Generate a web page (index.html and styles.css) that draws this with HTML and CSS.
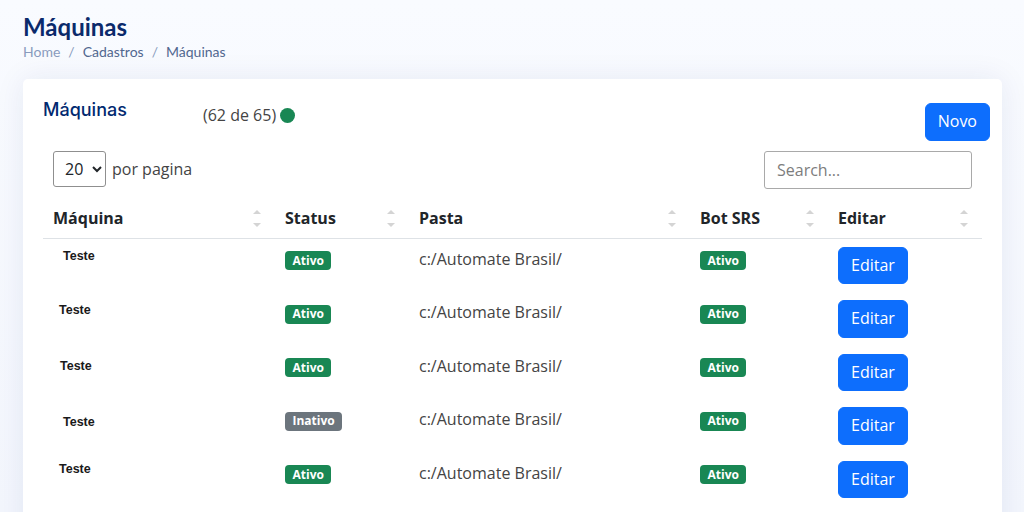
FILE: index.html
```html
<!DOCTYPE html>
<html lang="pt-BR">
<head>
<meta charset="utf-8">
<title>Máquinas</title>
<link rel="stylesheet" href="styles.css">
</head>
<body>
<main class="main">
  <div class="pagetitle">
    <h1>Máquinas</h1>
    <nav class="breadcrumb">
      <span class="bc-link">Home</span>
      <span class="bc-sep">/</span>
      <span class="bc-item">Cadastros</span>
      <span class="bc-sep">/</span>
      <span class="bc-item">Máquinas</span>
    </nav>
  </div>

  <section class="card">
    <div class="card-top">
      <h5 class="card-title">Máquinas</h5>
      <div class="count">(62 de 65) <span class="dot"></span></div>
      <button class="btn btn-primary btn-novo">Novo</button>
    </div>

    <div class="controls">
      <div class="per-page">
        <select class="selector">
          <option>20</option>
        </select>
        <span class="per-label">por pagina</span>
      </div>
      <input class="search" type="text" placeholder="Search...">
    </div>

    <table class="dt">
      <colgroup>
        <col class="c1"><col class="c2"><col class="c3"><col class="c4"><col class="c5">
      </colgroup>
      <thead>
        <tr>
          <th class="sortable">Máquina</th>
          <th class="sortable">Status</th>
          <th class="sortable">Pasta</th>
          <th class="sortable">Bot SRS</th>
          <th class="sortable">Editar</th>
        </tr>
      </thead>
      <tbody>
        <tr>
          <td><span class="name n1">Teste</span></td>
          <td><span class="badge bg-success">Ativo</span></td>
          <td class="path">c:/Automate Brasil/</td>
          <td><span class="badge bg-success">Ativo</span></td>
          <td><button class="btn btn-primary">Editar</button></td>
        </tr>
        <tr>
          <td><span class="name n2">Teste</span></td>
          <td><span class="badge bg-success">Ativo</span></td>
          <td class="path">c:/Automate Brasil/</td>
          <td><span class="badge bg-success">Ativo</span></td>
          <td><button class="btn btn-primary">Editar</button></td>
        </tr>
        <tr>
          <td><span class="name n3">Teste</span></td>
          <td><span class="badge bg-success">Ativo</span></td>
          <td class="path">c:/Automate Brasil/</td>
          <td><span class="badge bg-success">Ativo</span></td>
          <td><button class="btn btn-primary">Editar</button></td>
        </tr>
        <tr>
          <td><span class="name n4">Teste</span></td>
          <td><span class="badge bg-secondary">Inativo</span></td>
          <td class="path">c:/Automate Brasil/</td>
          <td><span class="badge bg-success">Ativo</span></td>
          <td><button class="btn btn-primary">Editar</button></td>
        </tr>
        <tr>
          <td><span class="name n5">Teste</span></td>
          <td><span class="badge bg-success">Ativo</span></td>
          <td class="path">c:/Automate Brasil/</td>
          <td><span class="badge bg-success">Ativo</span></td>
          <td><button class="btn btn-primary">Editar</button></td>
        </tr>
      </tbody>
    </table>
  </section>
</main>
</body>
</html>
```

FILE: styles.css
```css
* { box-sizing: border-box; }

html, body {
  margin: 0;
  height: 100%;
  overflow: hidden;
}

body {
  background: linear-gradient(180deg, #f9fbff 0%, #f3f6fd 100%);
  font-family: "Open Sans", "Noto Sans", sans-serif;
  color: #444444;
}

.main {
  padding: 12px 22px 0 23px;
}

.pagetitle {
  margin-bottom: 17px;
}

.pagetitle h1 {
  margin: 0;
  font-family: "Lato", "Open Sans", sans-serif;
  font-size: 24px;
  line-height: 29px;
  font-weight: 700;
  color: #0b2a6b;
}

.breadcrumb {
  display: flex;
  gap: 8px;
  font-family: "Lato", "Open Sans", sans-serif;
  font-size: 14px;
  line-height: 21px;
  font-weight: 400;
  color: #51678f;
}

.bc-link { color: #899bbd; }
.bc-sep { color: #899bbd; }

.card {
  background: #ffffff;
  border-radius: 5px;
  box-shadow: 0 0 30px rgba(1, 41, 112, 0.08);
  padding: 20px 20px 20px 20px;
  height: 500px;
}

.card-top {
  display: flex;
  align-items: flex-start;
}

.card-title {
  margin: 0;
  width: 160px;
  font-family: "Inter", "Roboto", sans-serif;
  font-size: 18px;
  line-height: 22px;
  font-weight: 500;
  color: #012970;
}

.count {
  margin-top: 4px;
  font-size: 16px;
  line-height: 24px;
  color: #444444;
  display: flex;
  align-items: center;
  gap: 4px;
}

.dot {
  display: inline-block;
  width: 15px;
  height: 15px;
  border-radius: 50%;
  background: #198754;
}

.btn {
  font-family: "Open Sans", sans-serif;
  font-size: 16px;
  line-height: 23.5px;
  padding: 6px 12px;
  border: 1px solid transparent;
  border-radius: 6px;
  cursor: pointer;
}

.btn-primary {
  background: #0d6efd;
  border-color: #0d6efd;
  color: #ffffff;
}

.btn-novo {
  margin-left: auto;
  margin-right: -8px;
  margin-top: 4px;
  padding: 6px 12px;
}

.controls {
  display: flex;
  justify-content: space-between;
  align-items: flex-start;
  padding: 0 10px;
  margin-top: 10px;
}

.per-page {
  display: flex;
  align-items: center;
  gap: 6px;
}

.selector {
  width: 53px;
  height: 36px;
  font-family: "Open Sans", sans-serif;
  font-size: 16px;
  color: #212529;
  border: 1px solid #8f8f8f;
  border-radius: 3px;
  background: #ffffff;
  padding: 0 4px 0 7px;
}

.per-label {
  font-size: 16px;
  color: #444444;
}

.search {
  width: 208px;
  height: 38px;
  border: 1px solid #a9a9a9;
  border-radius: 3px;
  padding: 0 12px;
  font-family: "Open Sans", sans-serif;
  font-size: 16px;
  color: #444444;
}

.search::placeholder {
  color: #7d7d7d;
}

.dt {
  margin-top: 9px;
  width: 939px;
  table-layout: fixed;
  border-collapse: collapse;
}

.c1 { width: 232px; }
.c2 { width: 134px; }
.c3 { width: 281px; }
.c4 { width: 138px; }
.c5 { width: 154px; }

.dt th {
  text-align: left;
  padding: 8px 10px;
  font-size: 16px;
  line-height: 24px;
  font-weight: 700;
  color: #212529;
  border-bottom: 1px solid #dee2e6;
  position: relative;
}

.sortable::before,
.sortable::after {
  content: "";
  position: absolute;
  right: 14px;
  width: 0;
  height: 0;
  border-left: 4px solid transparent;
  border-right: 4px solid transparent;
}

.sortable::before {
  top: 12px;
  border-bottom: 4px solid #d4d4d4;
}

.sortable::after {
  top: 25px;
  border-top: 4px solid #d4d4d4;
}

.dt td {
  padding: 8px 10px;
  vertical-align: top;
  font-size: 16px;
  line-height: 24px;
  color: #444444;
}

.path { color: #444444; }

.name {
  display: block;
  font-family: "Liberation Sans", Arial, sans-serif;
  font-size: 12.5px;
  line-height: 18px;
  font-weight: 700;
  color: #1a1a1a;
}

.n1 { margin: 0 0 0 10px; }
.n2 { margin: 0.5px 0 0 6px; }
.n3 { margin: 3px 0 0 7px; }
.n4 { margin: 5.5px 0 0 10px; }
.n5 { margin: -1px 0 0 6px; }

.badge {
  display: inline-block;
  padding: 3.5px 7.5px;
  font-family: "Open Sans", sans-serif;
  font-size: 12px;
  line-height: 12px;
  font-weight: 700;
  color: #ffffff;
  border-radius: 4px;
  vertical-align: baseline;
}

.bg-success { background: #198754; }
.bg-secondary { background: #6c757d; }
```
